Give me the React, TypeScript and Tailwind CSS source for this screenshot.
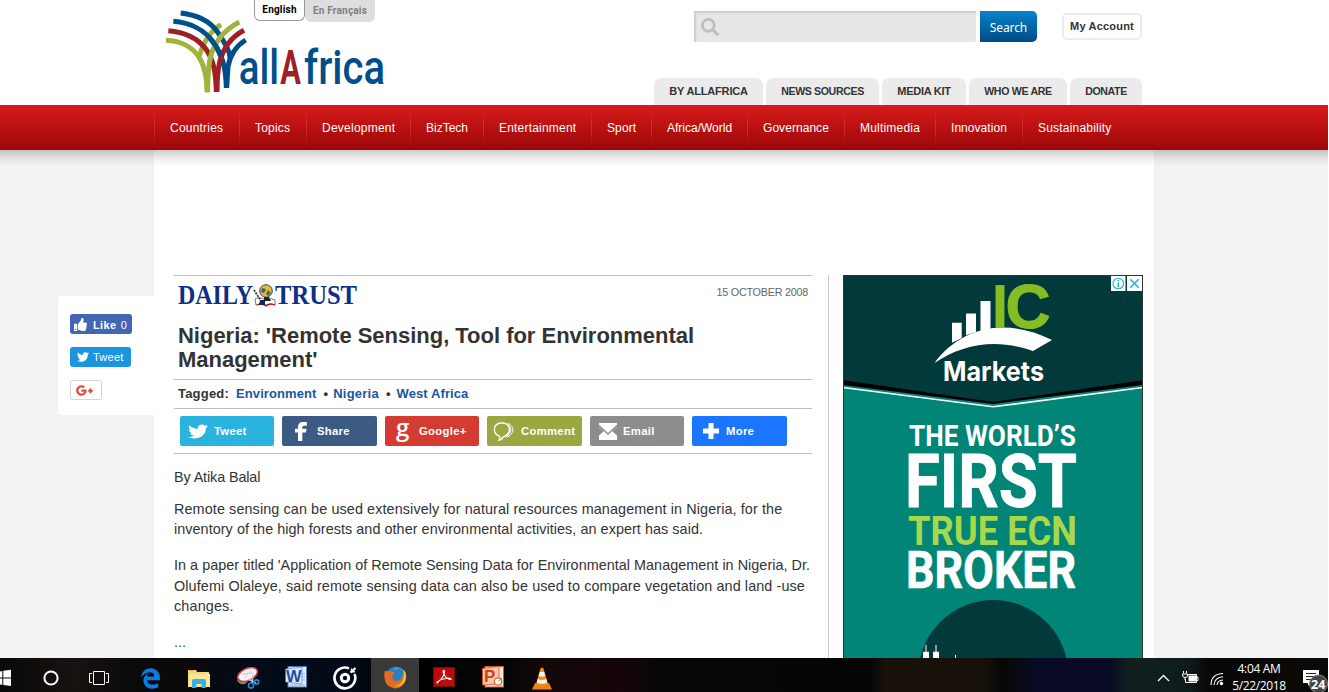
import React from "react";
import { FaEdgeLegacy, FaGooglePlusG, FaSearch, FaThumbsUp, FaTwitter } from "react-icons/fa";

const topTabs = [
  { label: "BY ALLAFRICA", style: "w-[109px] text-[11px] tracking-[-0.17px]" },
  { label: "NEWS SOURCES", style: "w-[113px] text-[10.6px] tracking-[-0.37px]" },
  { label: "MEDIA KIT", style: "w-[84px] text-[11px] tracking-[-0.25px]" },
  { label: "WHO WE ARE", style: "w-[98px] text-[10.6px] tracking-[-0.32px]" },
  { label: "DONATE", style: "w-[72px] text-[10.6px] tracking-[-0.37px]" },
];

const navItems = [
  { label: "Countries", style: "w-[85px] tracking-[0.22px]" },
  { label: "Topics", style: "w-[67px] tracking-[0.2px]" },
  { label: "Development", style: "w-[104px] tracking-[0.24px]" },
  { label: "BizTech", style: "w-[73px]" },
  { label: "Entertainment", style: "w-[108px] tracking-[0.2px]" },
  { label: "Sport", style: "w-[60px] tracking-[0.1px]" },
  { label: "Africa/World", style: "w-[96px]" },
  { label: "Governance", style: "w-[97px] tracking-[0.05px]" },
  { label: "Multimedia", style: "w-[91px] tracking-[0.2px]" },
  { label: "Innovation", style: "w-[87px] tracking-[0.05px]" },
  { label: "Sustainability", style: "w-[104px] tracking-[0.2px]" },
];

function Logo() {
  return (
    <svg className="h-[84px] w-[220px] overflow-visible" viewBox="48 30 660 252" fill="none">
      <g strokeWidth="15">
        <path d="M48 121C98 123 134 146 152 180C166 206 171 240 171 277" stroke="#a0b43b" />
        <path d="M213 74C184 92 160 126 148 168" stroke="#a0b43b" />
        <path d="M55 92C102 96 142 114 166 145C190 178 198 216 199 276" stroke="#9e1f24" />
        <path d="M92 39C138 44 180 62 204 98C222 126 238 146 241 178" stroke="#004f8b" />
        <path d="M70 64C120 68 164 90 189 126C216 164 228 200 229 264" stroke="#004f8b" />
        <path d="M268 66C230 86 198 120 184 162C176 188 173 230 173 277" stroke="#a0b43b" />
        <path d="M282 91C246 110 220 144 209 186C203 212 201 240 201 275" stroke="#9e1f24" />
        <path d="M287 120C258 138 240 166 234 200L230 263" stroke="#004f8b" />
        <path d="M176 110C192 128 204 146 212 168" stroke="#004f8b" />
      </g>
      <g fontFamily="Roboto, sans-serif" fontWeight="500" fontSize="146" fill="#004f8b">
        <text x="266" y="251" textLength="121" lengthAdjust="spacingAndGlyphs">all</text>
        <text x="462" y="251" textLength="243" lengthAdjust="spacingAndGlyphs">frica</text>
        <text x="391" y="251" fontWeight="700" textLength="62" lengthAdjust="spacingAndGlyphs" fill="#9e1f24">A</text>
      </g>
    </svg>
  );
}

function Header() {
  return (
    <header className="flex h-[105px] shrink-0 bg-white pl-[166px]">
      <div className="grid w-[488px] shrink-0 items-start">
        <div className="col-start-1 row-start-1 pt-[10px]">
          <Logo />
        </div>
        <div className="col-start-1 row-start-1 flex pl-[88px] font-[Roboto,sans-serif] text-[10px] leading-[19px] font-bold tracking-[0.2px]">
          <span className="h-[21px] w-[51px] rounded-b-md border border-t-0 border-[#999] bg-white text-center text-black">
            English
          </span>
          <span className="h-[22px] w-[70px] rounded-b-md bg-[#dedede] text-center leading-[22px] text-[#808080]">
            En Français
          </span>
        </div>
      </div>
      <div className="flex w-[488px] shrink-0 flex-col justify-between pt-[11px]">
        <div className="flex pl-[40px]">
          <div className="flex h-[31px] w-[282px] items-center bg-[#e7e7e7] pl-[7px] shadow-[inset_2px_2px_2px_#ccc]">
            <FaSearch className="h-[18px] w-[18px] text-[#bfbfbf]" />
          </div>
          <button className="ml-1 h-[31px] w-[57px] rounded-r-[5px] bg-linear-to-b from-[#0a83ca] to-[#004b85] pt-[2px] font-['Noto_Sans',sans-serif] text-[12px] tracking-[-0.1px] text-white">
            Search
          </button>
          <button className="mt-[2px] ml-[25px] h-[27px] w-[80px] rounded-[5px] border-2 border-[#ececec] text-[11px] font-bold tracking-[0.2px] whitespace-nowrap text-[#333]">
            My Account
          </button>
        </div>
        <div className="flex gap-[3px]">
          {topTabs.map((t) => (
            <span
              key={t.label}
              className={`${t.style} h-[27px] rounded-t-[7px] bg-[#ebebeb] text-center leading-[26px] font-bold whitespace-nowrap text-[#333]`}
            >
              {t.label}
            </span>
          ))}
        </div>
      </div>
    </header>
  );
}

function Nav() {
  return (
    <nav className="relative flex h-[45px] shrink-0 border-b border-[#940808] bg-linear-to-b from-[#d81a1b] to-[#9e0808] pl-[154px]">
      {navItems.map((n) => (
        <div key={n.label} className={`${n.style} flex shrink-0 items-center`}>
          <span className="h-[35px] w-px shrink-0 bg-linear-to-b from-[#d21718] via-[#e5282a] to-[#a90b0b]" />
          <span className="pt-[2px] pl-[15px] text-[12px] whitespace-nowrap text-white">{n.label}</span>
        </div>
      ))}
      <div className="absolute top-[45px] right-0 left-0 h-[16px] bg-linear-to-b from-black/20 via-black/7 to-transparent" />
    </nav>
  );
}

function SocialBox() {
  return (
    <aside className="mt-[146px] ml-[58px] flex h-[119px] w-[96px] shrink-0 flex-col items-start rounded-l bg-white pt-[18px] pl-[12px]">
      <div className="flex h-[20px] w-[62px] items-center rounded-[3px] bg-[#4267b2] pt-[2px] pl-[4px] text-[11px] text-white">
        <FaThumbsUp className="mr-[6px] mb-px h-[13px] w-[13px]" />
        <b className="tracking-[0.4px]">Like</b>
        <span className="ml-[4px]">0</span>
      </div>
      <div className="mt-[13px] flex h-[20px] w-[61px] items-center rounded-[3px] bg-[#1b95e0] pl-[7px] text-[11px] tracking-[0.25px] text-white">
        <FaTwitter className="mr-[4px] h-[12px] w-[12px] shrink-0" />
        Tweet
      </div>
      <div className="mt-[13px] flex h-[20px] w-[32px] items-center rounded-[2px] border border-[#d5d5d5] pl-[5px]">
        <FaGooglePlusG className="h-[17px] w-[17px] text-[#db4437]" stroke="#db4437" strokeWidth="12" />
      </div>
    </aside>
  );
}

function DailyTrust() {
  return (
    <svg className="h-[24px] w-[182px] overflow-visible" viewBox="0 0 182 24">
      <g fontFamily="Liberation Serif, serif" fontWeight="700" fontSize="26.5" fill="#0d2f86">
        <text x="0" y="20" textLength="75" lengthAdjust="spacingAndGlyphs">DAILY</text>
        <text x="97" y="20" textLength="82" lengthAdjust="spacingAndGlyphs">TRUST</text>
      </g>
      <path d="M77 15Q82 12 87 16Q93 13 97 16L97 21Q92 18 88 21Q84 18 78 21Z" fill="#fff" stroke="#555" strokeWidth="0.8" />
      <path d="M79 21Q84 19 88 22Q92 19 97 21" fill="none" stroke="#c11" strokeWidth="1.3" />
      <circle cx="88" cy="7" r="6.3" fill="#e9bd26" stroke="#26477d" strokeWidth="1" />
      <path d="M84 4L88 5L86 9L83 8ZM90 6L93 9L90 12L88 10Z" fill="#3e6190" />
      <path d="M76 6L83 17" stroke="#222" strokeWidth="1.6" strokeDasharray="2 1" />
      <path d="M82 16H87V21H81Z" fill="#142858" />
      <path d="M86 13H91L93 17H86Z" fill="#222" />
    </svg>
  );
}

const shareButtons = [
  {
    label: "Tweet", color: "bg-[#29b3de] w-[94px]", pad: "pl-[8px]", gap: "ml-[6px]",
    icon: <FaTwitter className="h-[17px] w-[20px]" preserveAspectRatio="none" />,
  },
  {
    label: "Share", color: "bg-[#3b5b85] w-[95px]", pad: "pl-[13px]", gap: "ml-[10px]",
    icon: (
      <svg className="h-[19px] w-[12px]" viewBox="0 0 12 19" fill="white">
        <path d="M3 19V10.5H0V6.8H3V5Q3 0 8 0H11.8V3.8H9Q7.3 3.8 7.3 5.3V6.8H11.6L11 10.5H7.3V19Z" />
      </svg>
    ),
  },
  {
    label: "Google+", color: "bg-[#d43b31] w-[94px]", pad: "pl-[11px]", gap: "ml-[9px]",
    icon: (
      <svg className="h-[22px] w-[14px] overflow-visible" viewBox="0 0 14 22">
        <text x="0" y="15.5" fontFamily="Open Sans, sans-serif" fontWeight="600" fontSize="24" fill="white">g</text>
      </svg>
    ),
  },
  {
    label: "Comment", color: "bg-[#9ba841] w-[95px]", pad: "pl-[6px]", gap: "ml-[6px]",
    icon: (
      <svg className="mt-[2px] h-[20px] w-[22px]" viewBox="0 0 22 20" fill="none" stroke="white" strokeWidth="1.3">
        <path d="M6 14C-1 11 0 1 9 1C18 1 19 12 10 15Q9 18 6 18Q8 16 6 14Z" />
        <path d="M13 1.5C20 4 19 12 12 15M15 1.5C23 5 20 13 14 15" strokeWidth="1" />
      </svg>
    ),
  },
  {
    label: "Email", color: "bg-[#8d8d8d] w-[94px]", pad: "pl-[9px]", gap: "ml-[6px]",
    icon: (
      <svg className="h-[17px] w-[18px]" viewBox="0 0 18 17">
        <path d="M0 0H18V17H0Z" fill="white" />
        <path d="M0 4L5 8L0 12.5M18 4L13 8L18 12.5" fill="#8d8d8d" />
        <path d="M0 2.5L9 11L18 2.5" fill="none" stroke="#8d8d8d" strokeWidth="1.5" />
      </svg>
    ),
  },
  {
    label: "More", color: "bg-[#1a75ff] w-[95px]", pad: "pl-[11px]", gap: "ml-[7px]",
    icon: (
      <svg className="h-[16px] w-[16px]" viewBox="0 0 16 16">
        <path d="M5.5 0H10.5V5.5H16V10.5H10.5V16H5.5V10.5H0V5.5H5.5Z" fill="white" />
      </svg>
    ),
  },
];

function Article() {
  return (
    <article className="w-[638px] shrink-0 border-t border-[#bfbfbf] text-[#333]">
      <div className="flex h-[39px] items-start justify-between pr-[4px] pl-[4px]">
        <div className="pt-[8px]">
          <DailyTrust />
        </div>
        <span className="pt-[8px] text-[10.8px] leading-[17px] tracking-[-0.25px] text-[#666]">15 OCTOBER 2008</span>
      </div>
      <h1 className="mt-[9px] ml-[4px] h-[55px] text-[22px] leading-[24px] font-bold tracking-[-0.02px] whitespace-nowrap">
        Nigeria: 'Remote Sensing, Tool for Environmental
        <br />
        Management'
      </h1>
      <div className="flex h-[29px] items-center border-t border-[#bfbfbf] pl-[4px] text-[13px] font-bold whitespace-pre">
        <span className="tracking-[0.2px]">Tagged:</span>
        <a className="ml-[7px] tracking-[0.1px] text-[#1a57a0]">Environment</a>
        <span className="mr-[5px] ml-[7px]">•</span>
        <a className="tracking-[0.25px] text-[#1a57a0]">Nigeria</a>
        <span className="mr-[6px] ml-[7px]">•</span>
        <a className="tracking-[0.1px] text-[#1a57a0]">West Africa</a>
      </div>
      <div className="flex h-[46px] gap-[8px] border-y border-[#bfbfbf] pt-[7px] pl-[6px]">
        {shareButtons.map((b) => (
          <div
            key={b.label}
            className={`${b.color} ${b.pad} flex h-[30px] shrink-0 items-center rounded-[2px] text-[11.3px] font-bold tracking-[0.3px] text-white`}
          >
            {b.icon}
            <span className={b.gap}>{b.label}</span>
          </div>
        ))}
      </div>
      <div className="text-[14.4px] leading-[20.5px] whitespace-nowrap">
        <p className="mt-[13px] tracking-[-0.12px]">By Atika Balal</p>
        <p className="mt-[11px]">
          <span className="tracking-[0.1px]">
            Remote sensing can be used extensively for natural resources management in Nigeria, for the
          </span>
          <br />
          <span className="tracking-[0.05px]">
            inventory of the high forests and other environmental activities, an expert has said.
          </span>
        </p>
        <p className="mt-[15.5px]">
          <span className="tracking-[0.03px]">
            In a paper titled 'Application of Remote Sensing Data for Environmental Management in Nigeria, Dr.
          </span>
          <br />
          <span className="tracking-[0.1px]">
            Olufemi Olaleye, said remote sensing data can also be used to compare vegetation and land -use
          </span>
          <br />
          <span className="tracking-[0.15px]">changes.</span>
        </p>
        <p className="mt-[15.5px] text-[#1a57a0]">...</p>
      </div>
    </article>
  );
}

function MarketsAd() {
  return (
    <svg className="h-[383px] w-[300px] shrink-0" viewBox="0 0 300 383">
      <rect width="300" height="383" fill="#008577" />
      <path d="M0 0H300V105L150 128L0 105Z" fill="#02393b" />
      <path d="M0 105L150 127L300 105V110L150 129L0 110Z" fill="#000" />
      <path d="M0 112.5L150 131.8L300 112.5" fill="none" stroke="#fff" strokeWidth="1.6" />
      <g fill="#fff">
        <path d="M109 47.7H118.7V63L109 67.8ZM123 38.6H133V57L123 60.3ZM137.5 26H147.5V54.5L137.5 56Z" />
        <path d="M91.5 88C120 50 165 43 209 65L190 76C153 63 120 69 91.5 88Z" />
        <text x="100" y="105.7" fontFamily="Inter, sans-serif" fontWeight="700" fontSize="27" textLength="101" lengthAdjust="spacingAndGlyphs">Markets</text>
      </g>
      <g fill="#86bd24" fontFamily="Liberation Sans, sans-serif" fontWeight="700" fontSize="63">
        <text x="148.5" y="53" textLength="17" lengthAdjust="spacingAndGlyphs">I</text>
        <text x="162.5" y="53" textLength="45" lengthAdjust="spacingAndGlyphs" stroke="#86bd24" strokeWidth="1">C</text>
      </g>
      <g fontFamily="Roboto, sans-serif" fontWeight="700" fill="#fff">
        <text x="66" y="171" fontSize="30" textLength="167" lengthAdjust="spacingAndGlyphs">THE WORLD’S</text>
        <text x="62" y="231.7" fontSize="73.5" textLength="172" lengthAdjust="spacingAndGlyphs" stroke="#fff" strokeWidth="0.8">FIRST</text>
        <text x="65" y="270" fontSize="41.5" fill="#a7d84b" textLength="169" lengthAdjust="spacingAndGlyphs">TRUE ECN</text>
        <text x="63" y="313" fontSize="51" textLength="170" lengthAdjust="spacingAndGlyphs" stroke="#fff" strokeWidth="0.6">BROKER</text>
      </g>
      <circle cx="150.3" cy="400" r="75" fill="#02393b" />
      <path d="M80 376.7H86V383H80ZM90 376.7H96V383H90ZM82.5 370H83.5V377H82.5ZM92.5 370H93.5V377H92.5ZM112 380H113V383H112Z" fill="#fff" />
      <path d="M0.5 383V0.5H299.5V383" fill="none" stroke="#333" />
      <path d="M268 1H282.5V16H268ZM284 1H299V16H284Z" fill="#fff" />
      <g fill="none" stroke="#20b4d0">
        <circle cx="275.3" cy="8.5" r="5.3" strokeWidth="1.1" />
        <path d="M275.3 7.5V12M275.3 4.7V6.2" strokeWidth="1.6" />
        <path d="M287.3 4.3L295.7 12.7M295.7 4.3L287.3 12.7" strokeWidth="1.5" />
      </g>
    </svg>
  );
}

function TaskIcons() {
  return (
    <div className="flex h-full items-center">
      <div className="flex w-[27px] pt-[6px]">
        <svg className="h-[18px] w-[12px]" viewBox="0 0 12 18" fill="white">
          <path d="M0 2.4L2.3 2V8.5H0ZM3.3 1.8L11 0.7V8.5H3.3ZM0 9.5H2.3V15.8L0 15.5ZM3.3 9.5H11V17L3.3 16Z" />
        </svg>
      </div>
      <div className="flex w-[48px] justify-center pt-[6px]">
        <svg className="h-[16px] w-[16px]" viewBox="0 0 16 16">
          <circle cx="8" cy="8" r="6.6" fill="none" stroke="white" strokeWidth="2" />
        </svg>
      </div>
      <div className="flex w-[48px] justify-center pt-[6px]">
        <svg className="h-[16px] w-[20px]" viewBox="0 0 20 16" fill="none" stroke="white">
          <path d="M4.5 1.5H15.5V14.5H4.5ZM3 3.5H0.5V12.5H3M17 3.5H19.5V12.5H17" />
        </svg>
      </div>
      <div className="flex w-[54px] justify-center pt-[6px]">
        <FaEdgeLegacy className="h-[21px] w-[21px] text-[#0a7be0]" />
      </div>
      <div className="flex w-[44px] justify-center pt-[6px]">
        <svg className="h-[19px] w-[22px]" viewBox="0 0 22 19">
          <path d="M0 1H8L9 3H21V18H0Z" fill="#f7d774" />
          <path d="M1 1.5H5" stroke="#e8a32c" />
          <path d="M1 5H22V18H1Z" fill="#fce498" />
          <path d="M4 19V12Q4 10 6 10H16Q18 10 18 12V19H13.5V15H8.5V19Z" fill="#33b1e3" />
        </svg>
      </div>
      <div className="flex w-[53px] justify-center pt-[5px]">
        <svg className="h-[22px] w-[24px]" viewBox="0 0 24 22">
          <path d="M1 13Q3 18 9 17L14 12Z" fill="#888" />
          <ellipse cx="11.5" cy="7.5" rx="10.5" ry="6" transform="rotate(-25 11.5 7.5)" fill="#f3f1f1" stroke="#d8343b" strokeWidth="1.5" />
          <path d="M6 7L18 6M8 11L15 4" stroke="#ccc" />
          <path d="M17 8L16 16M12 12L20 16" stroke="#bfc7d0" strokeWidth="1.5" />
          <circle cx="15" cy="18.5" r="2.5" fill="none" stroke="#2589cb" strokeWidth="1.7" />
          <circle cx="20.5" cy="15" r="2.2" fill="none" stroke="#2589cb" strokeWidth="1.7" />
        </svg>
      </div>
      <div className="flex w-[44px] justify-center pt-[3px]">
        <svg className="h-[22px] w-[22px]" viewBox="0 0 22 22">
          <rect x="3" y="0.5" width="18.5" height="20.5" fill="#e5edf8" stroke="#4a79bd" />
          <path d="M17 8H20M17 11H20M17 14H20M5 19H20" stroke="#91addb" />
          <path d="M0.5 3L17 1V18L0.5 16Z" fill="#dce9fa" stroke="#4a79bd" strokeWidth="0.6" />
          <text x="1" y="15.5" fontFamily="Liberation Sans, sans-serif" fontWeight="700" fontSize="16.5" fill="#1f4c9c">W</text>
        </svg>
      </div>
      <div className="flex w-[53px] justify-center pt-[6px]">
        <svg className="h-[24px] w-[24px]" viewBox="0 0 24 24" fill="none" stroke="white" strokeWidth="2.6">
          <path d="M16 2.4A10.4 10.4 0 1 0 21.5 8" />
          <circle cx="12" cy="12" r="3.7" strokeWidth="3" />
          <path d="M17.5 6.5L22.5 2" strokeWidth="2.2" />
          <path d="M18.5 2.5V5.8H22" strokeWidth="1.4" />
        </svg>
      </div>
      <div className="flex h-full w-[48px] items-center justify-center bg-[#393939] pt-[5px]">
        <svg className="h-[23px] w-[23px]" viewBox="0 0 23 23">
          <circle cx="12" cy="10.8" r="10.3" fill="#2d80bf" />
          <path d="M10 4Q16 -1 21 8Q20 4 15 2Q11 1 10 4Z" fill="#8ed0ef" />
          <path d="M1 4Q2 6 4 5Q7 5 10 6Q11 8 8 10Q8 15 13 15Q18 14 19 9Q18 6 20 4Q23 8 22 13Q20 22 11 22.5Q1 21 0.5 12Q0 7 1 4Z" fill="#e86b1c" />
          <path d="M20 4Q23 9 21 15Q17 22 10 20Q16 20 19 14Q20 10 20 4Z" fill="#f7c52c" />
        </svg>
      </div>
      <div className="flex w-[49px] justify-center pt-[3px]">
        <svg className="h-[20px] w-[22px]" viewBox="0 0 22 20">
          <rect x="0.5" y="0.5" width="21" height="19" fill="#bd0a0a" stroke="#750a0a" />
          <path d="M4 15Q9 13 11 7Q12 3 10.5 3.5Q9 4 12 9Q15 13 18 12.5Q18 10.5 13 11.5Q7 12 5 15Q4 17 4 15Z" fill="none" stroke="#fff" strokeWidth="1.1" />
        </svg>
      </div>
      <div className="flex w-[49px] justify-center pt-[3px]">
        <svg className="h-[22px] w-[22px]" viewBox="0 0 22 22">
          <rect x="3" y="0.5" width="18.5" height="20.5" fill="#f9e5da" stroke="#d6562a" />
          <path d="M0.5 2.5L17 0.5V18L0.5 19Z" fill="#f7c9b2" stroke="#db5524" strokeWidth="0.8" />
          <text x="2" y="15.5" fontFamily="Liberation Sans, sans-serif" fontWeight="700" fontSize="17" fill="#cd4516">P</text>
          <circle cx="16" cy="15.5" r="3.7" fill="#fff" stroke="#dd6332" strokeWidth="1.3" />
          <path d="M16 15.5L20 12" stroke="#dd6332" />
        </svg>
      </div>
      <div className="flex w-[50px] justify-center pt-[6px]">
        <svg className="h-[23px] w-[20px]" viewBox="0 0 20 23">
          <path d="M3 16H17L20 22.5H0Z" fill="#ef8212" />
          <path d="M8.7 1Q10 0 11.3 1L16 17Q10 20 4 17Z" fill="#f58b17" />
          <path d="M7.8 5H12.2L13.3 9Q10 10.5 6.7 9ZM5.7 12Q10 14 14.3 12L15.3 15.5Q10 18 4.8 15.5Z" fill="#f2f2f2" />
        </svg>
      </div>
    </div>
  );
}

function Tray() {
  return (
    <div className="flex h-full items-center text-white">
      <svg className="mt-[5px] h-[8px] w-[13px]" viewBox="0 0 13 8" fill="none" stroke="white" strokeWidth="1.3">
        <path d="M1 7L6.5 1.5L12 7" />
      </svg>
      <svg className="mt-[5px] ml-[12px] h-[13px] w-[17px]" viewBox="0 0 17 13" fill="none" stroke="white">
        <path d="M5.5 3.5H14.5V11.5H3.5V8" />
        <path d="M15 6H16V9.5H15" />
        <rect x="7" y="5" width="6.5" height="5" fill="white" />
        <path d="M1.5 0V2.5M4.5 0V2.5M0.5 3H5.5V5Q5 6.5 3 6.5Q0.5 6.5 0.5 4ZM3 6V9" />
      </svg>
      <svg className="mt-[8px] ml-[11px] h-[14px] w-[14px]" viewBox="0 0 14 14" fill="none" stroke="white" strokeWidth="1.1">
        <path d="M1 13Q1 2 13 1.5M4 13Q4.5 5.5 13 4.8M7 13Q7.5 8.5 13 8" />
        <circle cx="11.5" cy="11.5" r="1.7" fill="white" stroke="none" />
      </svg>
      <div className="ml-[6px] w-[58px] pt-[4px] text-center font-['Open_Sans',sans-serif] text-[12px] leading-[17px] tracking-[-0.35px] whitespace-nowrap">
        <div>4:04 AM</div>
        <div>5/22/2018</div>
      </div>
      <svg className="ml-[13px] h-[34px] w-[27px]" viewBox="0 0 27 34">
        <path d="M2 12H18V25H9L7 28V25H2Z" fill="white" />
        <path d="M5 15.5H15M5 18.5H15M5 21.5H11" stroke="#222" />
        <circle cx="17.5" cy="26" r="9" fill="#444" stroke="#888" />
        <text x="10" y="30.5" fontFamily="Open Sans, sans-serif" fontWeight="700" fontSize="12.5" fill="white">24</text>
      </svg>
    </div>
  );
}

export default function App() {
  return (
    <div className="flex h-[692px] w-[1329px] flex-col overflow-hidden border-r border-white bg-[#f3f3f3] font-['Liberation_Sans',Arial,sans-serif]">
      <Header />
      <Nav />
      <main className="flex h-[508px] shrink-0 overflow-hidden">
        <SocialBox />
        <div className="flex w-[1000px] shrink-0 items-start bg-white pt-[125px] pl-[20px]">
          <Article />
          <div className="mr-[14px] ml-[16px] h-[383px] w-px shrink-0 bg-[#c8c8c8]" />
          <MarketsAd />
        </div>
      </main>
      <footer className="flex h-[34px] shrink-0 justify-between bg-[linear-gradient(90deg,#090909_0,#17120f_70px,#0a0a0b_140px,#0c0909_180px,#020b19_250px,#020b17_350px,#000_390px,#050505_510px,#12080a_540px,#170508_620px,#070606_660px,#050505_870px,#18110a_885px,#17110a_980px,#080708_1005px,#090b24_1035px,#090b24_1110px,#10201f_1130px,#0e1b1b_1190px,#070706_1210px,#0c0a07_1329px)]">
        <TaskIcons />
        <Tray />
      </footer>
    </div>
  );
}
